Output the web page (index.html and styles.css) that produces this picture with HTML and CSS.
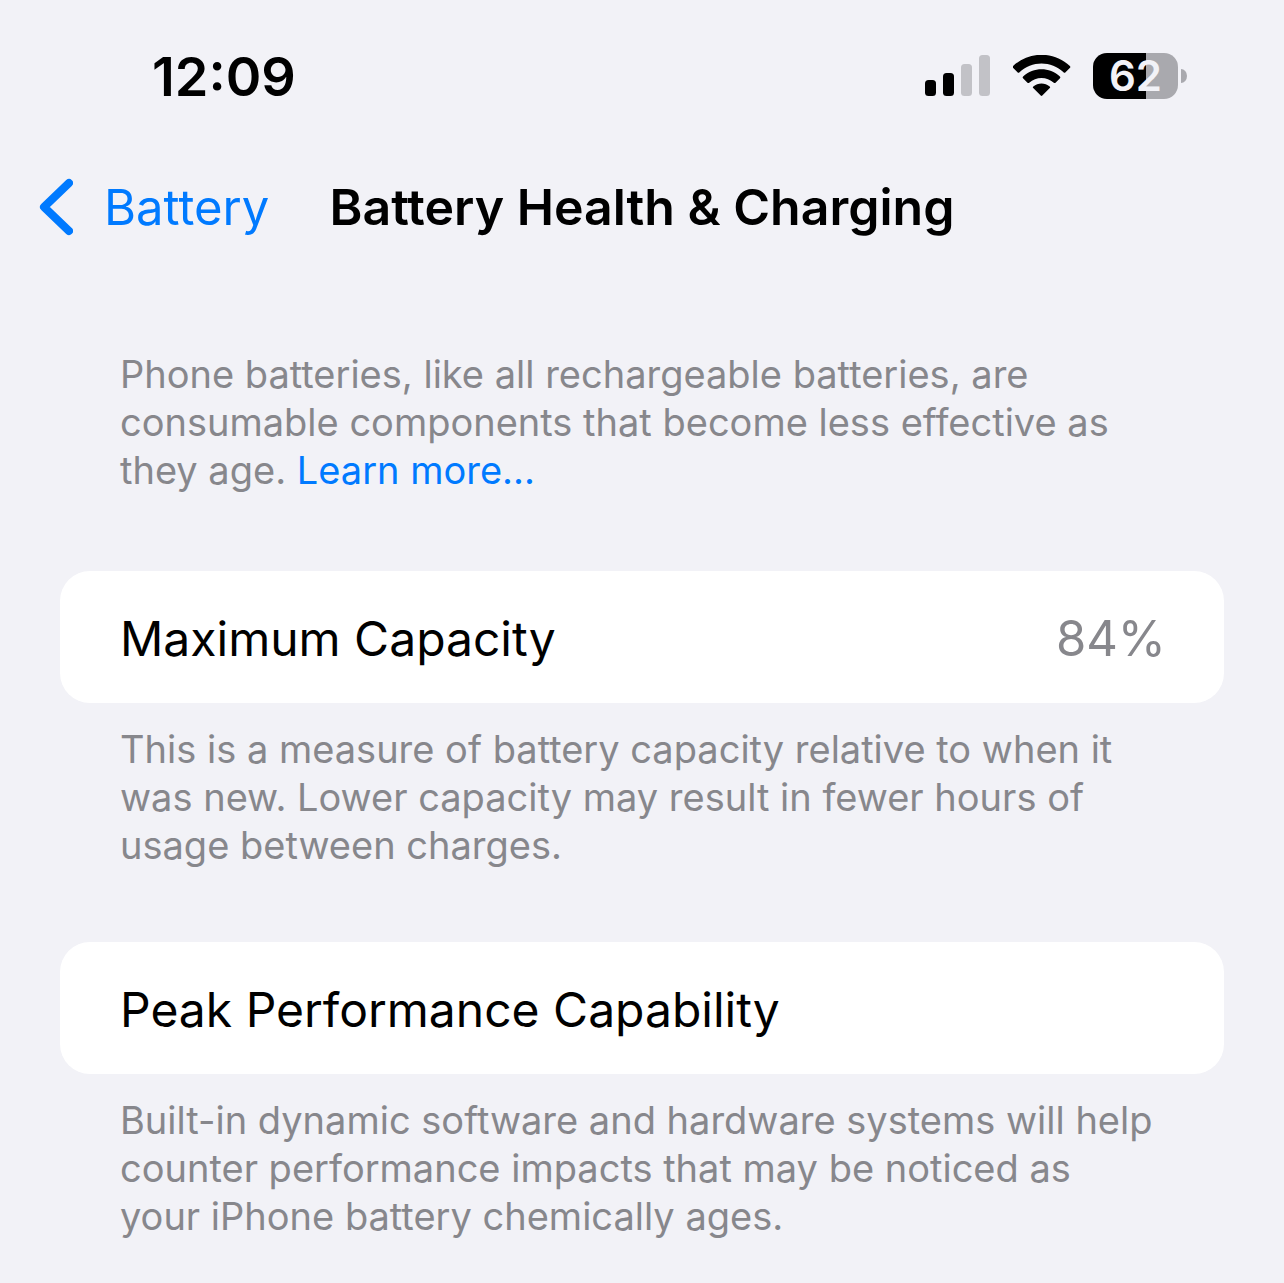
FILE: index.html
```html
<!DOCTYPE html>
<html lang="en">
<head>
<meta charset="utf-8">
<meta name="viewport" content="width=device-width, initial-scale=1">
<title>Battery Health &amp; Charging</title>
<link rel="stylesheet" href="styles.css">
</head>
<body>
<div class="status">
  <time class="clock">12:09</time>
  <div class="indicators">
    <svg class="signal" viewBox="0 0 66 42" role="img" aria-label="Signal">
      <rect x="0" y="25" width="11" height="16" rx="3.500"/>
      <rect x="18" y="18" width="11" height="23" rx="3.500"/>
      <rect class="dim" x="36" y="9" width="11" height="32" rx="3.500"/>
      <rect class="dim" x="54" y="0" width="11" height="41" rx="3.500"/>
    </svg>
    <svg class="wifi" viewBox="0 0 58 42" role="img" aria-label="Wi-Fi">
      <path d="M28.500 8.500C36.500 8.500 44.500 11.500 50.500 17.300C51.200 18 51.900 18 52.500 17.300L57 12.800C57.500 12.200 57.400 11.500 56.900 11C40.800-4 16.200-4 .1 11C-.4 11.500-.5 12.200 0 12.800L4.500 17.300C5.100 18 5.800 18 6.500 17.300C12.500 11.500 20.500 8.500 28.500 8.500Z"/>
      <path d="M28.500 23C33 23 37.200 24.600 40.800 27.700C41.400 28.200 42 28.200 42.500 27.700L47 23.200C47.500 22.600 47.500 22 46.900 21.400C36.400 11.700 20.600 11.700 10.100 21.400C9.500 22 9.500 22.600 10 23.200L14.500 27.700C15 28.200 15.600 28.200 16.200 27.700C19.800 24.600 24 23 28.500 23Z"/>
      <path d="M36.800 33.100C37.300 32.600 37.300 31.900 36.700 31.400C32 27.500 25 27.500 20.300 31.400C19.700 31.900 19.700 32.600 20.200 33.100L27.700 40.500C28.200 41 28.800 41 29.300 40.500Z"/>
    </svg>
    <div class="battery"><span>62</span></div>
  </div>
</div>
<header class="nav">
  <a class="back" href="#">
    <svg class="chevron" viewBox="0 0 34 58" aria-hidden="true"><path d="M30 5L5 29L30 53"/></svg>
    <span>Battery</span>
  </a>
  <h1 class="title">Battery Health &amp; Charging</h1>
</header>
<main class="content">
  <p class="note intro">Phone batteries, like all rechargeable batteries, are consumable components that become less effective as they age. <a href="#">Learn more...</a></p>
  <section class="group">
    <div class="card"><h2 class="label">Maximum Capacity</h2><span class="value">84%</span></div>
    <p class="note">This is a measure of battery capacity relative to when it was new. Lower capacity may result in fewer hours of usage between charges.</p>
  </section>
  <section class="group">
    <div class="card"><h2 class="label">Peak Performance Capability</h2></div>
    <p class="note">Built-in dynamic software and hardware systems will help counter performance impacts that may be noticed as your iPhone battery chemically ages.</p>
  </section>
</main>
</body>
</html>
```
FILE: styles.css
```css
* { box-sizing: border-box; }
body {
  margin: 0;
  background: #f2f2f7;
  color: #000;
  font-family: Inter, "Liberation Sans", sans-serif;
}
h1, h2, p { margin: 0; }
a { color: #007aff; text-decoration: none; }
.status {
  display: flex;
  align-items: center;
  justify-content: space-between;
  height: 152px;
  padding: 0 106px 0 152px;
}
.clock { font-size: 54px; font-weight: 600; }
.indicators { display: flex; align-items: center; gap: 22px; }
.signal { width: 66px; height: 42px; }
.dim { fill: #c2c2c7; }
.wifi { width: 58px; height: 42px; }
.battery {
  position: relative;
  width: 85px;
  height: 46px;
  border-radius: 14px;
  background: linear-gradient(90deg, #000 62%, #a9a9ae 62%);
  color: #f2f2f7;
  font-size: 42px;
  font-weight: 600;
  line-height: 46px;
  text-align: center;
}
.battery::after {
  content: "";
  position: absolute;
  left: 88px;
  top: 16px;
  width: 6px;
  height: 14px;
  border-radius: 0 6px 6px 0 / 0 7px 7px 0;
  background: #a9a9ae;
}
.nav {
  display: grid;
  grid-template-columns: 1fr auto 1fr;
  align-items: center;
  height: 110px;
  padding: 0 39px;
}
.back { display: flex; align-items: center; gap: 31px; font-size: 49px; }
.chevron {
  width: 34px;
  height: 58px;
  fill: none;
  stroke: #007aff;
  stroke-width: 8;
  stroke-linecap: round;
  stroke-linejoin: round;
}
.title { font-size: 50px; font-weight: 600; }
.content { padding: 88px 60px 0; }
.note { padding: 0 66px 0 60px; color: #87878c; font-size: 38px; line-height: 48px; }
.intro { margin-bottom: 77px; }
.group { margin-bottom: 73px; }
.group:last-child { margin-bottom: 40px; }
.card {
  display: flex;
  align-items: center;
  justify-content: space-between;
  min-height: 132px;
  margin-bottom: 22px;
  padding: 2px 58px 0 60px;
  border-radius: 30px;
  background: #fff;
}
.label { font-size: 48px; font-weight: 400; }
.value { color: #87878c; font-size: 49px; }
```
